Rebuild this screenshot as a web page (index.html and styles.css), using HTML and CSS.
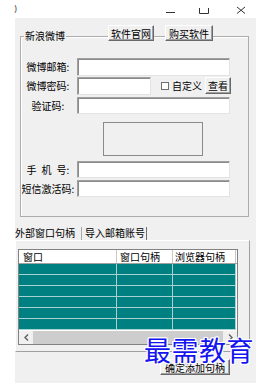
FILE: index.html
```html
<!DOCTYPE html>
<html lang="zh-CN">
<head>
    <meta charset="UTF-8">
    <title>新浪微博</title>
    <link rel="stylesheet" href="styles.css">
</head>
<body>
<div class="titlebar">
    <span class="app-mark">)</span>
    <svg class="caption" width="90" height="18" viewBox="0 0 90 18">
        <path d="M6 12.5H15"/>
        <path d="M39.5 8V13.5H48.5V8"/>
        <path d="M77 7L85 13.5M85 7L77 13.5"/>
    </svg>
</div>

<div class="window">
    <div class="group">
        <div class="group-head">
            <span class="legend">新浪微博</span>
            <button class="btn btn-site">软件官网</button>
            <button class="btn btn-buy">购买软件</button>
        </div>
        <div class="field row-mail">
            <span class="lbl">微博邮箱:</span>
            <div class="edit"></div>
        </div>
        <div class="field row-pass">
            <span class="lbl">微博密码:</span>
            <div class="edit edit-short"></div>
            <span class="check"></span>
            <span class="check-text">自定义</span>
            <button class="btn btn-view">查看</button>
        </div>
        <div class="field row-code">
            <span class="lbl">验证码:</span>
            <div class="edit"></div>
        </div>
        <div class="captcha"></div>
        <div class="field row-phone">
            <span class="lbl">手&ensp;机&ensp;号:</span>
            <div class="edit"></div>
        </div>
        <div class="field row-sms">
            <span class="lbl">短信激活码:</span>
            <div class="edit"></div>
        </div>
    </div>

    <div class="tabstrip">
        <span class="tab tab-on">外部窗口句柄</span>
        <span class="tab tab-off">导入邮箱账号</span>
    </div>
    <div class="panel">
        <div class="list">
            <div class="list-head">
                <span class="hcell c1">窗口</span>
                <span class="hcell c2">窗口句柄</span>
                <span class="hcell c3">浏览器句柄</span>
            </div>
            <div class="list-body">
                <div class="row"><span class="cell c1"></span><span class="cell c2"></span><span class="cell c3"></span></div>
                <div class="row"><span class="cell c1"></span><span class="cell c2"></span><span class="cell c3"></span></div>
                <div class="row"><span class="cell c1"></span><span class="cell c2"></span><span class="cell c3"></span></div>
                <div class="row"><span class="cell c1"></span><span class="cell c2"></span><span class="cell c3"></span></div>
                <div class="row"><span class="cell c1"></span><span class="cell c2"></span><span class="cell c3"></span></div>
                <div class="row"><span class="cell c1"></span><span class="cell c2"></span><span class="cell c3"></span></div>
            </div>
            <div class="hscroll">
                <span class="arrow">
                    <svg width="5" height="7" viewBox="0 0 5 7"><path d="M4 0.5L1 3.5L4 6.5"/></svg>
                </span>
                <span class="thumb"></span>
                <span class="arrow">
                    <svg width="5" height="7" viewBox="0 0 5 7"><path d="M1 0.5L4 3.5L1 6.5"/></svg>
                </span>
            </div>
        </div>
    </div>

    <button class="btn btn-add">确定添加句柄</button>
</div>

<!-- watermark over the bottom right corner -->
<div class="watermark">最需教育</div>
</body>
</html>
```

FILE: styles.css
```css
* {
    box-sizing: border-box;
}

html, body {
    margin: 0;
}

body {
    position: relative;
    width: 264px;
    height: 383px;
    overflow: hidden;
    background: #fff;
    color: #000;
    font-family: "Noto Sans CJK SC", "Microsoft YaHei", sans-serif;
    font-size: 10px;
}

.titlebar {
    display: flex;
    height: 18px;
    padding: 0 14px;
}

.app-mark {
    margin-top: 5px;
    font-family: "DejaVu Sans", sans-serif;
    font-size: 8px;
    line-height: 9px;
    color: #333;
}

.caption {
    margin-left: auto;
    fill: none;
    stroke: #333;
    stroke-width: 1;
}

.window {
    display: flex;
    flex-direction: column;
    width: 241px;
    height: 365px;
    margin-left: 15px;
    padding-top: 18px;
    background: #f0f0f0;
}

/* group box */
.group {
    display: flex;
    flex-direction: column;
    width: 229px;
    margin-left: 5px;
    padding-bottom: 19px;
    border: 1px solid #acacac;
    box-shadow: inset 1px 1px 0 #fff;
}

.group-head {
    display: flex;
    align-items: flex-start;
    height: 16px;
    margin-top: -12px;
    padding-left: 3px;
}

.legend {
    flex: none;
    width: 42px;
    margin-top: 5px;
    padding: 0 1px;
    line-height: 12px;
    white-space: nowrap;
    background: #f0f0f0;
}

.btn {
    flex: none;
    height: 16px;
    padding: 0;
    font: inherit;
    font-size: 10px;
    line-height: 13px;
    color: #000;
    text-align: center;
    white-space: nowrap;
    background: #f0f0f0;
    border: 1px solid;
    border-color: #fff #696969 #696969 #fff;
    box-shadow: inset -1px -1px 0 #a0a0a0;
}

.btn-site {
    width: 46px;
    margin-left: 42px;
}

.btn-buy {
    width: 48px;
    margin-left: 11px;
}

.field {
    display: flex;
    align-items: center;
    height: 18px;
}

.lbl {
    flex: none;
    width: 54px;
    line-height: 12px;
    text-align: center;
    white-space: nowrap;
}

.edit {
    flex: none;
    width: 153px;
    height: 100%;
    margin-left: 2px;
    background: #fff;
    border: 1px solid;
    border-color: #a0a0a0 #e3e3e3 #e3e3e3 #a0a0a0;
    box-shadow: inset 1px 1px 0 #8a8a8a;
}

.edit-short {
    width: 74px;
}

.row-mail {
    margin-top: 17px;
}

.row-pass {
    margin-top: 1px;
    align-items: flex-start;
}

.row-pass .lbl {
    margin-top: 3px;
}

.check {
    flex: none;
    width: 8px;
    height: 8px;
    margin: 5px 0 0 10px;
    background: #fff;
    border: 1px solid #707070;
}

.check-text {
    margin: 3px 0 0 3px;
    line-height: 12px;
    white-space: nowrap;
}

.btn-view {
    width: 26px;
    height: 17px;
    margin-left: 3px;
}

.row-code {
    height: 17px;
    margin-top: 2px;
}

.captcha {
    width: 100px;
    height: 34px;
    margin: 8px 0 0 82px;
    border: 1px solid #8a8a8a;
}

.row-phone {
    height: 17px;
    margin-top: 5px;
}

.row-sms {
    height: 17px;
    margin-top: 2px;
}

/* tabs */
.tabstrip {
    display: flex;
    height: 14px;
    margin-top: 9px;
}

.tab {
    padding-top: 1px;
    line-height: 12px;
    white-space: nowrap;
}

.tab-on {
    width: 66px;
}

.tab-off {
    margin-top: 1px;
    padding: 0 1px 0 3px;
    border-left: 1px solid #a8a8a8;
    border-right: 1px solid #707070;
}

.panel {
    width: 235px;
    height: 112px;
    padding: 8px 0 0 2px;
    border: 1px solid;
    border-color: #fff #a0a0a0 #a0a0a0 #fff;
}

.list {
    display: flex;
    flex-direction: column;
    width: 220px;
    height: 96px;
    background: #fff;
    border: 1px solid #828282;
}

.list-head {
    display: flex;
    height: 14px;
    border-bottom: 1px solid #a0a0a0;
}

.hcell {
    line-height: 13px;
    white-space: nowrap;
    border-right: 1px solid #c8c8c8;
}

.c1 {
    width: 98px;
}

.c2 {
    width: 56px;
}

.c3 {
    width: 63px;
}

.hcell.c1 {
    padding-left: 4px;
}

.hcell.c2 {
    padding-left: 3px;
}

.hcell.c3 {
    padding-left: 2px;
}

.list-body {
    display: flex;
    flex-direction: column;
    height: 66px;
}

.row {
    display: flex;
    height: 11px;
}

.cell {
    background: #008080;
    border-right: 1px solid #a6d2d2;
    border-bottom: 1px solid #a6d2d2;
}

.hscroll {
    display: flex;
    height: 14px;
    background: #f0f0f0;
    border-top: 1px solid #fff;
}

.arrow {
    display: flex;
    align-items: center;
    justify-content: center;
    width: 14px;
}

.arrow svg {
    fill: none;
    stroke: #606060;
    stroke-width: 1.4;
}

.thumb {
    flex: 1;
    background: #cdcdcd;
}

.btn-add {
    align-self: flex-start;
    width: 70px;
    margin: 7px 0 0 145px;
}

.watermark {
    position: absolute;
    left: 144px;
    top: 335px;
    font-size: 27px;
    line-height: 30px;
    letter-spacing: 0.5px;
    color: #1414f0;
    white-space: nowrap;
    text-shadow: 1px 0 0 #fff, -1px 0 0 #fff, 0 1px 0 #fff, 0 -1px 0 #fff,
        1px 1px 0 #fff, -1px -1px 0 #fff, 1px -1px 0 #fff, -1px 1px 0 #fff,
        0 0 2px #fff;
}
```
